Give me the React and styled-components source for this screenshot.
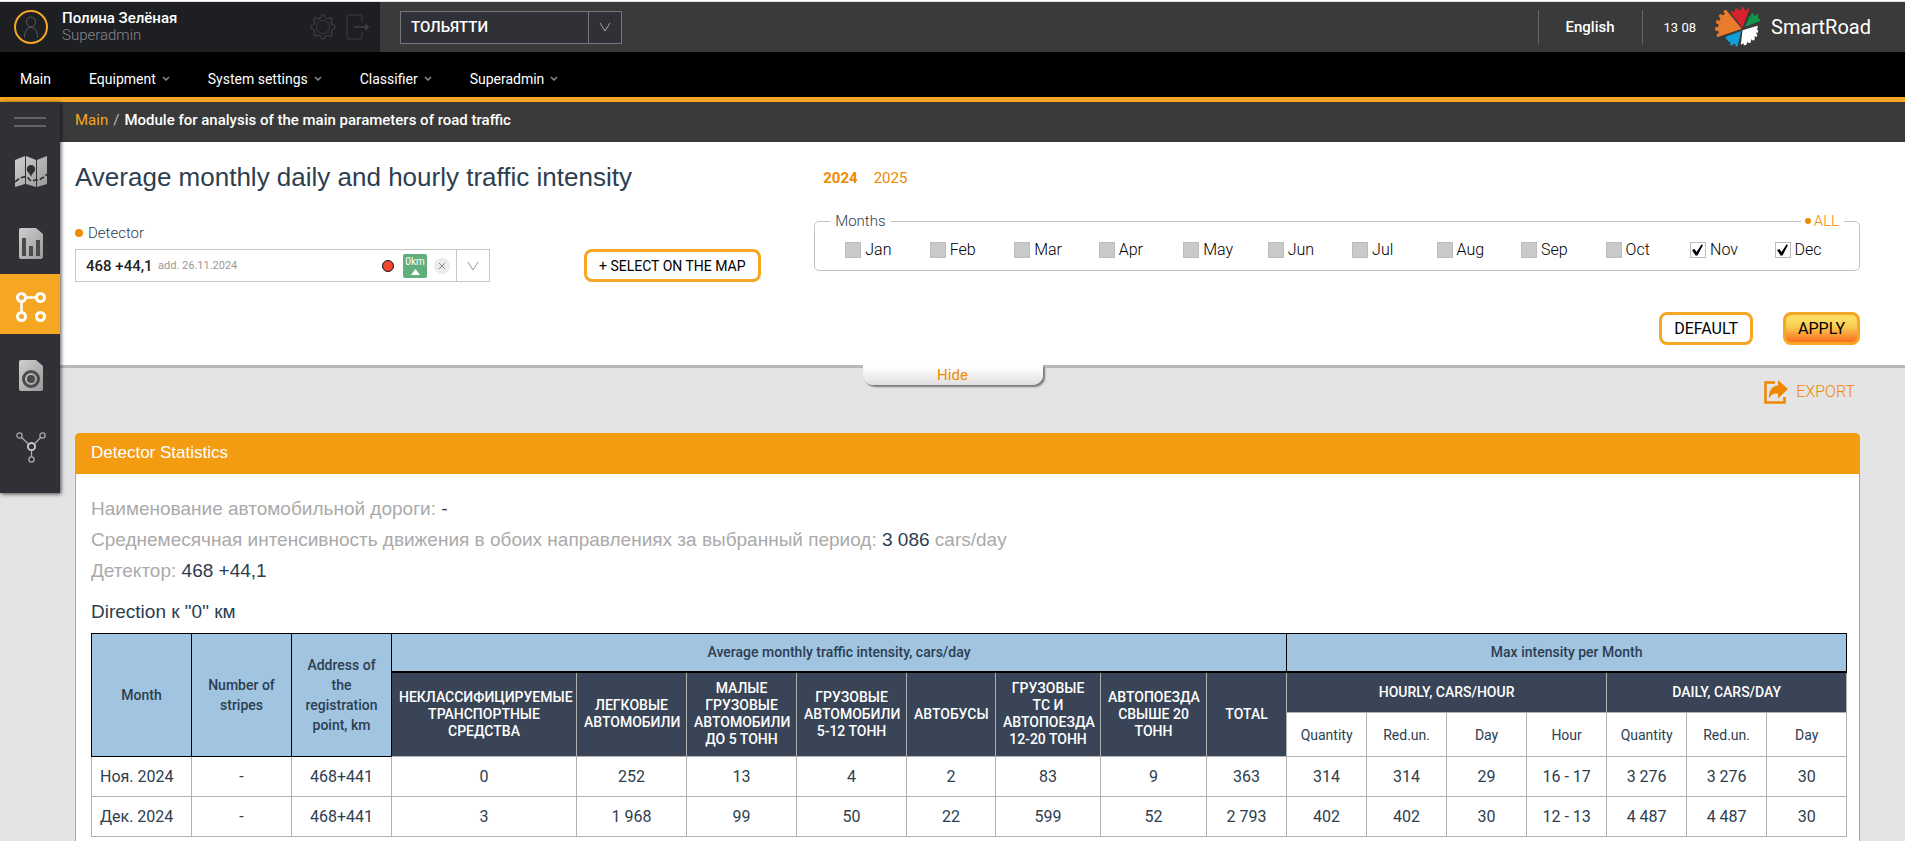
import { useState } from "react";
import styled, { createGlobalStyle } from "styled-components";

const GlobalStyle = createGlobalStyle`
  *,
  *::before,
  *::after {
    box-sizing: border-box;
  }
  body {
    margin: 0;
    background-color: #fff;
    color: #2c3e50;
    font-family: Roboto, "Liberation Sans", sans-serif;
    font-size: 15px;
  }
  button,
  select,
  input {
    font-family: inherit;
    margin: 0;
  }
  button {
    cursor: pointer;
  }
  a {
    color: inherit;
    text-decoration: none;
  }
  ul {
    list-style: none;
    margin: 0;
    padding: 0;
  }
`;

const Page = styled.div`
  display: flex;
  flex-direction: column;
  min-height: 100vh;
  padding-top: 1px;
  padding-right: 3px;
`;

const TopBar = styled.header`
  display: flex;
  height: 51px;
  border-top: 1px solid #dfe1e5;
  background-color: #393a39;
  color: #fff;
`;

const UserBox = styled.div`
  display: flex;
  align-items: center;
  width: 380px;
  padding: 0 10px 0 14px;
  background-color: #1e1f23;
`;

const Avatar = styled.div`
  display: grid;
  place-items: center;
  width: 34px;
  height: 34px;
  margin-right: 14px;
  border: 2px solid #f5a623;
  border-radius: 50%;
`;

const UserName = styled.div`
  flex: 1;
  line-height: 17px;

  strong {
    display: block;
    font-size: 15px;
    font-weight: 500;
  }
  span {
    display: block;
    color: #85868a;
    font-size: 15px;
    font-weight: 300;
  }
`;

const IconButton = styled.button`
  display: flex;
  margin-left: 10px;
  padding: 0;
  border: none;
  background: none;
  color: #3f4043;
`;

const CitySelect = styled.div`
  position: relative;
  align-self: center;
  width: 222px;
  height: 33px;
  margin-left: 20px;
  border: 1px solid #77787a;
  background-color: #303137;

  select {
    appearance: none;
    width: 100%;
    height: 100%;
    padding: 0 44px 0 10px;
    border: none;
    background: none;
    color: #fff;
    font-size: 15px;
    font-weight: 500;
  }
`;

const SelectArrow = styled.span`
  position: absolute;
  top: 0;
  right: 0;
  display: grid;
  place-items: center;
  width: 33px;
  height: 100%;
  border-left: 1px solid #77787a;
  color: #a5a6a8;
  pointer-events: none;
`;

const TopRight = styled.div`
  display: flex;
  align-items: center;
  margin-left: auto;
  padding-right: 34px;
`;

const Language = styled.button`
  height: 34px;
  padding: 0 27px;
  border: solid #636463;
  border-width: 0 1px;
  background: none;
  color: #fff;
  font-size: 15px;
  font-weight: 500;
`;

const Clock = styled.time`
  padding: 0 19px 0 21px;
  font-size: 13px;
`;

const Brand = styled.a`
  display: flex;
  align-items: center;
  gap: 10px;
  font-size: 20px;
`;

const MainMenu = styled.nav`
  display: flex;
  align-items: center;
  gap: 38px;
  height: 50px;
  padding: 8px 20px 0;
  border-bottom: 5px solid #f5a623;
  background-color: #000;
  color: #fff;
  font-size: 14px;

  a {
    display: flex;
    align-items: center;
    gap: 6px;
  }
  svg {
    color: #8d8d8d;
  }
`;

const Body = styled.div`
  display: flex;
  flex: 1;
  background-color: #e4e4e4;
`;

const SideNav = styled.nav`
  position: relative;
  z-index: 1;
  flex: none;
  align-self: flex-start;
  width: 60px;
  padding-bottom: 15px;
  background-color: #303137;
  box-shadow: 1px 1px 4px rgba(0, 0, 0, 0.7);

  ul {
    display: grid;
    grid-template-rows: 76px 68px 60px 76px 68px;
  }
`;

const MenuToggle = styled.button`
  display: flex;
  flex-direction: column;
  gap: 6px;
  width: 60px;
  height: 28px;
  padding: 15px 14px 0;
  border: none;
  background: none;

  span {
    height: 2px;
    background-color: #626366;
  }
`;

const SideLink = styled.a`
  display: grid;
  place-items: center;
  height: 100%;
  padding: 6px 0 0 2px;
  background-color: ${({ $active }) => ($active ? "#f5a623" : "transparent")};
`;

const Content = styled.div`
  display: flex;
  flex: 1;
  flex-direction: column;
  min-width: 0;
`;

const Breadcrumbs = styled.div`
  height: 40px;
  padding: 0 15px;
  background-color: #393a39;
  color: #fff;
  font-size: 15px;
  font-weight: 500;
  line-height: 37px;

  a {
    color: #f5a623;
    font-weight: 400;
  }
  i {
    margin: 0 5px;
    color: #bbb;
    font-style: normal;
    font-weight: 400;
  }
`;

const Filters = styled.form`
  position: relative;
  display: grid;
  grid-template-columns: 41fr 58fr;
  padding: 20px 45px 20px 15px;
  border-bottom: 3px solid #b9b9b9;
  background-color: #fff;
`;

const Title = styled.h1`
  margin: 0 0 33px;
  font-family: "Liberation Sans", Arial, sans-serif;
  font-size: 26px;
  font-weight: 400;
  line-height: 30px;
`;

const DetectorLabel = styled.label`
  display: flex;
  align-items: center;
  gap: 5px;
  margin-bottom: 4px;
  font-size: 15px;
  font-weight: 300;
  line-height: 16px;

  &::before {
    content: "";
    width: 8px;
    height: 8px;
    border-radius: 50%;
    background-color: #f08a00;
  }
`;

const DetectorRow = styled.div`
  display: flex;
  align-items: center;
  gap: 94px;
  margin-top: 8px;
`;

const DetectorField = styled.div`
  display: flex;
  align-items: center;
  width: 415px;
  height: 33px;
  padding-left: 10px;
  border: 1px solid #c6c6c6;

  select {
    appearance: none;
    padding: 0;
    border: none;
    background: none;
    color: #222;
    font-size: 15px;
    font-weight: 500;
  }
  small {
    flex: 1;
    margin-left: 5px;
    color: #999;
    font-size: 11px;
  }
`;

const StatusDot = styled.span`
  width: 12px;
  height: 12px;
  border: 1px solid #111;
  border-radius: 50%;
  background-color: #f0492e;
`;

const KmBadge = styled.span`
  display: flex;
  flex-direction: column;
  align-items: center;
  gap: 2px;
  width: 24px;
  height: 24px;
  margin: 0 7px 0 9px;
  padding-top: 3px;
  border-radius: 2px;
  background-color: #63ae7d;
  color: #fff;
  font-size: 10px;
  line-height: 10px;
`;

const ClearButton = styled.button`
  display: grid;
  place-items: center;
  width: 16px;
  height: 16px;
  margin-right: 6px;
  padding: 0;
  border: none;
  border-radius: 50%;
  background-color: #ececec;
  color: #888;
`;

const OpenButton = styled.button`
  display: grid;
  place-items: center;
  width: 33px;
  height: 31px;
  padding: 0;
  border: none;
  border-left: 1px solid #c6c6c6;
  background: none;
  color: #999;
`;

const OutlineButton = styled.button`
  height: 33px;
  padding: 0 12px;
  border: 3px solid #f5a623;
  border-radius: 8px;
  background: ${({ $filled }) =>
    $filled ? "linear-gradient(#fbdb62 20%, #f9c94f 45%, #fb6d20)" : "#fff"};
  color: #000;
  font-size: ${({ $small }) => ($small ? "14px" : "16px")};
`;

const Years = styled.div`
  display: flex;
  gap: 16px;
  margin: 7px 0 24px 9px;
`;

const YearButton = styled.button`
  padding: 0;
  border: none;
  background: none;
  color: #f08a00;
  font-size: 15px;
  font-weight: ${({ $active }) => ($active ? 700 : 400)};
  line-height: 18px;
`;

const Months = styled.fieldset`
  position: relative;
  margin: 0;
  padding: 11px 0 12px 30px;
  border: 1px solid #c2c2c2;
  border-radius: 5px;

  legend {
    margin-left: -15px;
    padding: 0 5px;
    font-size: 15px;
    font-weight: 300;
    line-height: 20px;
  }
`;

const AllButton = styled.button`
  position: absolute;
  top: -20px;
  right: 15px;
  display: flex;
  align-items: center;
  gap: 3px;
  padding: 0 5px 0 4px;
  border: none;
  background-color: #fff;
  color: #f08a00;
  font-size: 15px;
  font-weight: 300;
  line-height: 20px;

  &::before {
    content: "";
    width: 6px;
    height: 6px;
    border-radius: 50%;
    background-color: #f08a00;
  }
`;

const MonthList = styled.div`
  display: grid;
  grid-template-columns: repeat(12, 1fr);
`;

const MonthLabel = styled.label`
  display: flex;
  align-items: center;
  gap: 4px;
  color: #000;
  font-size: 16px;
  font-weight: 300;
  line-height: 16px;
`;

const CheckBox = styled.span`
  display: grid;
  width: 16px;
  height: 16px;

  input,
  svg {
    grid-area: 1 / 1;
  }
  input {
    appearance: none;
    width: 16px;
    height: 16px;
    border: 1px solid #bdbdbd;
    background-color: #c9c9c9;
  }
  input:checked {
    background-color: #fff;
  }
  svg {
    display: none;
    pointer-events: none;
  }
  input:checked + svg {
    display: block;
  }
`;

const FormActions = styled.div`
  display: flex;
  justify-content: flex-end;
  gap: 30px;
  margin-top: 41px;
`;

const HideButton = styled.button`
  position: absolute;
  top: 100%;
  left: calc(50% - 30px);
  width: 180px;
  height: 20px;
  padding: 0;
  border: none;
  border-radius: 0 0 10px 10px;
  background: linear-gradient(#fff 10%, #dfdfdf);
  box-shadow: 2px 2px 2px #777;
  color: #f08a00;
  font-size: 15px;
  transform: translateX(-50%);
`;

const Toolbar = styled.div`
  display: flex;
  justify-content: flex-end;
  padding: 12px 50px 29px 0;
`;

const ExportButton = styled.button`
  display: flex;
  align-items: center;
  gap: 8px;
  padding: 0;
  border: none;
  background: none;
  color: #ef8600;
  font-size: 16px;
  font-weight: 300;
  line-height: 24px;
`;

const Panel = styled.section`
  flex: 1;
  margin: 0 45px 0 15px;
  border: solid #f39c12;
  border-width: 0 1px;
  border-radius: 5px 5px 0 0;
  background-color: #fff;
  font-family: "Liberation Sans", Arial, sans-serif;
`;

const PanelHeader = styled.h2`
  height: 41px;
  margin: 0 -1px;
  padding: 0 16px;
  border-radius: 5px 5px 0 0;
  background-color: #f39c12;
  color: #fff;
  font-size: 17px;
  font-weight: 400;
  line-height: 39px;
`;

const PanelBody = styled.div`
  padding: 19px 13px 4px 15px;
`;

const InfoLine = styled.p`
  margin: 0;
  color: #aaa;
  font-size: 19px;
  line-height: 31px;

  b {
    color: #2c3e50;
    font-weight: 400;
  }
`;

const Direction = styled.h3`
  margin: 10px 0 5px;
  font-size: 19px;
  font-weight: 400;
  line-height: 32px;
`;

const StatsTable = styled.table`
  width: 100%;
  border-collapse: collapse;
  table-layout: fixed;
  background-color: #fff;
  font-family: Roboto, "Liberation Sans", sans-serif;
  text-align: center;

  th,
  td {
    padding: 0 7px;
    border: 1px solid #b0b0b0;
  }
  td {
    height: 40px;
    font-size: 16px;
    font-weight: 400;
  }
  td:first-child {
    padding-left: 8px;
    text-align: left;
  }
`;

const GroupHead = styled.th`
  height: 38px;

  ${StatsTable} & {
    padding: 0 12px;
    border: 1px solid #000;
    border-bottom-width: ${({ rowSpan }) => (rowSpan ? "1px" : "2px")};
  }
  background-color: #a1c4e1;
  font-size: 14px;
  font-weight: 500;
  line-height: 20px;
`;

const DarkHead = styled.th`
  height: 41px;
  background-color: #394457;
  color: #fff;
  font-size: 14px;
  font-weight: 500;
  line-height: 17px;
  text-transform: uppercase;
`;

const SubHead = styled.th`
  height: 44px;
  font-size: 14px;
  font-weight: 400;
`;

const menuItems = ["Equipment", "System settings", "Classifier", "Superadmin"];

const monthNames = [
  "Jan",
  "Feb",
  "Mar",
  "Apr",
  "May",
  "Jun",
  "Jul",
  "Aug",
  "Sep",
  "Oct",
  "Nov",
  "Dec",
];

const columnWidths = [
  100, 100, 100, 185, 110, 110, 110, 89, 105, 106, 80, 80, 80, 80, 80, 80, 80,
  80,
];

const vehicleHeads = [
  "Неклассифицируемые транспортные средства",
  "Легковые автомобили",
  "Малые грузовые автомобили до 5 тонн",
  "Грузовые автомобили 5-12 тонн",
  "Автобусы",
  "Грузовые ТС и автопоезда 12-20 тонн",
  "Автопоезда свыше 20 тонн",
  "Total",
];

const subHeads = [
  "Quantity",
  "Red.un.",
  "Day",
  "Hour",
  "Quantity",
  "Red.un.",
  "Day",
];

const rows = [
  ["Ноя. 2024", "-", "468+441", "0", "252", "13", "4", "2", "83", "9", "363"]
    .concat(["314", "314", "29", "16 - 17", "3 276", "3 276", "30"]),
  ["Дек. 2024", "-", "468+441", "3", "1 968", "99", "50", "22", "599", "52"]
    .concat(["2 793", "402", "402", "30", "12 - 13", "4 487", "4 487", "30"]),
];

function Chevron({ width = 12, height = 10, stroke = 1 }) {
  return (
    <svg width={width} height={height} viewBox={`0 0 ${width} ${height}`}>
      <path
        d={`M1 1 L${width / 2} ${height - 1} L${width - 1} 1`}
        fill="none"
        stroke="currentColor"
        strokeWidth={stroke}
      />
    </svg>
  );
}

function UserIcon() {
  return (
    <svg width="16" height="22" viewBox="0 0 16 22" fill="none" stroke="#5c5d60">
      <ellipse cx="8" cy="6" rx="4.5" ry="5" />
      <path d="M1.5 21.5C1.5 15 4 11.5 8 11.5s6.500 3.500 6.500 10" />
    </svg>
  );
}

function GearIcon() {
  const teeth = [0, 45, 90, 135, 180, 225, 270, 315];
  return (
    <svg width="26" height="26" viewBox="0 0 26 26" fill="none" stroke="currentColor">
      <circle cx="13" cy="13" r="6.500" />
      {teeth.map((angle) => (
        <path
          key={angle}
          transform={`rotate(${angle} 13 13)`}
          d="M9.300 4.300 L11 3.700 L11.500 1 H14.500 L15 3.700 L16.700 4.300 Q17.800 4.800 18.300 4"
        />
      ))}
    </svg>
  );
}

function LogoutIcon() {
  return (
    <svg width="24" height="26" viewBox="0 0 24 26" fill="none" stroke="currentColor">
      <path d="M16 8 V3 Q16 1 14 1 H3 Q1 1 1 3 V23 Q1 25 3 25 H14 Q16 25 16 23 V18" />
      <path d="M8 13 H22" strokeWidth="1.500" />
      <path d="M19 9.500 L23.500 13 L19 16.500 Z" fill="currentColor" stroke="none" />
    </svg>
  );
}

function BrandLogo() {
  return (
    <svg width="46" height="40" viewBox="645 21 137 120">
      <path
        fill="#e87b2c"
        d="M725 86 L651 112 L649 103 L656 100 L654 92 L645 92 L645 82 L654 81 L655 73 L647 70 L649 60 L658 62 L661 55 L655 49 L660 42 L668 46 L674 41 L669 33 L678 29 L683 36 Z"
      />
      <path
        fill="#d8222b"
        d="M727 83 L690 37 L695 33 L699 35 L705 33 L704 26 L712 24 L715 31 L723 30 L724 22 L732 22 L733 30 L740 30 L742 24 L748 26 Z"
      />
      <path
        fill="#0b9a4b"
        d="M735 80 L748 49 L752 50 L753 41 L760 40 L761 47 L766 47 L770 42 L775 46 L772 52 L777 56 L781 62 Z"
      />
      <path
        fill="#fff"
        d="M727 91 L772 77 L773 84 L769 87 L774 91 L773 98 L767 98 L772 105 L769 111 L763 109 L764 118 L759 122 L753 118 L752 127 L746 130 L742 125 L738 135 L731 136 L730 130 L722 134 Z"
      />
      <path
        fill="#119fda"
        d="M723 93 L714 131 L712 140 L706 139 L706 133 L700 132 L695 137 L689 133 L692 126 L685 125 L681 119 L676 114 L677 110 Z"
      />
    </svg>
  );
}

function Silver() {
  return (
    <defs>
      <linearGradient id="silver" x1="0" y1="0" x2="1" y2="1">
        <stop offset="0" stopColor="#cfcfcf" />
        <stop offset="1" stopColor="#9a9a9a" />
      </linearGradient>
    </defs>
  );
}

function MapIcon() {
  return (
    <svg width="32" height="31" viewBox="0 0 32 31">
      <Silver />
      <path fill="url(#silver)" d="M0 4 L10 0 V28 L0 31 Z M11 0 L21 4 V31 L11 28 Z M22 4 L32 0 V28 L22 31 Z" />
      <path
        fill="#303137"
        d="M16 9 a4.200 4.200 0 0 1 4.200 4.200 C20.200 16 17 17 16 21 C15 17 11.800 16 11.800 13.200 A4.200 4.200 0 0 1 16 9 Z"
      />
      <path d="M0 26 Q6 20 12 21 L16 25 L21 24 Q27 24 32 18" fill="none" stroke="#303137" strokeWidth="1.600" strokeDasharray="5 2" />
    </svg>
  );
}

function ReportIcon() {
  return (
    <svg width="24" height="31" viewBox="0 0 24 31">
      <path fill="url(#silver)" d="M2 0 H17 L24 6 V29 Q24 31 22 31 H2 Q0 31 0 29 V2 Q0 0 2 0 Z" />
      <path fill="#4b4b4b" d="M3 10 H7 V28 H3 Z M10 18 H14 V28 H10 Z M17 12 H21 V28 H17 Z" />
    </svg>
  );
}

function NodesIcon() {
  return (
    <svg width="30" height="30" viewBox="0 0 30 30" fill="none" stroke="#fff" strokeWidth="3">
      <circle cx="5.500" cy="5.500" r="4" />
      <circle cx="24.500" cy="5.500" r="4" />
      <circle cx="5.500" cy="24.500" r="4" />
      <circle cx="24.500" cy="24.500" r="4" />
      <path d="M9.500 5.500 H20.500 M5.500 9.500 V20.500" strokeWidth="2.500" />
    </svg>
  );
}

function CameraIcon() {
  return (
    <svg width="24" height="31" viewBox="0 0 24 31">
      <path fill="url(#silver)" d="M2 0 H17 L24 6 V29 Q24 31 22 31 H2 Q0 31 0 29 V2 Q0 0 2 0 Z" />
      <circle cx="12" cy="19" r="7.500" fill="none" stroke="#4b4b4b" strokeWidth="3" />
      <circle cx="12" cy="19" r="4" fill="#4b4b4b" />
    </svg>
  );
}

function NetworkIcon() {
  return (
    <svg width="30" height="31" viewBox="0 0 30 31" fill="none" stroke="#aaa">
      <circle cx="3.500" cy="3.500" r="2.600" strokeWidth="1.300" />
      <circle cx="26.500" cy="3.500" r="2.600" strokeWidth="1.300" />
      <circle cx="15.500" cy="27.500" r="2.600" strokeWidth="1.300" />
      <circle cx="15.500" cy="14.500" r="3.600" stroke="#c4c4c4" strokeWidth="2" />
      <path d="M5.500 5.500 L12.500 12 M24.500 5.500 L18.500 12 M15.500 18.500 V25" strokeWidth="1.300" />
    </svg>
  );
}

function ExportIcon() {
  return (
    <svg width="24" height="24" viewBox="0 0 24 24">
      <path d="M11 2.500 H1.500 V22.500 H20.500 V17" fill="none" stroke="currentColor" strokeWidth="2.500" />
      <path
        fill="currentColor"
        d="M14 0 L24 9 L14 18.500 V13.500 C9 13 7 15 5 18.500 C4.500 11 8 6 14 5.500 Z"
      />
    </svg>
  );
}

const sideItems = [
  { title: "Map", icon: <MapIcon /> },
  { title: "Reports", icon: <ReportIcon /> },
  { title: "Traffic analysis", icon: <NodesIcon />, active: true },
  { title: "Cameras", icon: <CameraIcon /> },
  { title: "Network", icon: <NetworkIcon /> },
];

function Header() {
  return (
    <TopBar>
      <UserBox>
        <Avatar>
          <UserIcon />
        </Avatar>
        <UserName>
          <strong>Полина Зелёная</strong>
          <span>Superadmin</span>
        </UserName>
        <IconButton type="button" aria-label="Settings">
          <GearIcon />
        </IconButton>
        <IconButton type="button" aria-label="Log out">
          <LogoutIcon />
        </IconButton>
      </UserBox>
      <CitySelect>
        <select aria-label="City">
          <option>ТОЛЬЯТТИ</option>
        </select>
        <SelectArrow>
          <Chevron width={12} height={10} />
        </SelectArrow>
      </CitySelect>
      <TopRight>
        <Language type="button">English</Language>
        <Clock>13 08</Clock>
        <Brand href="#">
          <BrandLogo />
          SmartRoad
        </Brand>
      </TopRight>
    </TopBar>
  );
}

function SideBar() {
  return (
    <SideNav>
      <MenuToggle type="button" aria-label="Menu">
        <span />
        <span />
      </MenuToggle>
      <ul>
        {sideItems.map((item) => (
          <li key={item.title}>
            <SideLink href="#" aria-label={item.title} $active={item.active}>
              {item.icon}
            </SideLink>
          </li>
        ))}
      </ul>
    </SideNav>
  );
}

function FilterForm() {
  const [year, setYear] = useState("2024");
  const [months, setMonths] = useState(["Nov", "Dec"]);

  function toggleMonth(name) {
    setMonths((list) =>
      list.includes(name) ? list.filter((m) => m !== name) : [...list, name]
    );
  }

  return (
    <Filters onSubmit={(e) => e.preventDefault()}>
      <div>
        <Title>Average monthly daily and hourly traffic intensity</Title>
        <DetectorLabel htmlFor="detector">Detector</DetectorLabel>
        <DetectorRow>
          <DetectorField>
            <select id="detector">
              <option>468 +44,1</option>
            </select>
            <small>add. 26.11.2024</small>
            <StatusDot />
            <KmBadge>
              0km
              <svg width="9" height="6" viewBox="0 0 9 6" fill="#fff">
                <path d="M4.500 0 L9 6 H0 Z" />
              </svg>
            </KmBadge>
            <ClearButton type="button" aria-label="Clear">
              <svg width="6" height="6" viewBox="0 0 6 6" stroke="currentColor">
                <path d="M0 0 L6 6 M6 0 L0 6" />
              </svg>
            </ClearButton>
            <OpenButton type="button" aria-label="Open">
              <Chevron width={12} height={10} />
            </OpenButton>
          </DetectorField>
          <OutlineButton type="button" $small>
            + SELECT ON THE MAP
          </OutlineButton>
        </DetectorRow>
      </div>
      <div>
        <Years>
          {["2024", "2025"].map((y) => (
            <YearButton
              key={y}
              type="button"
              $active={y === year}
              onClick={() => setYear(y)}
            >
              {y}
            </YearButton>
          ))}
        </Years>
        <Months>
          <legend>Months</legend>
          <AllButton type="button" onClick={() => setMonths(monthNames)}>
            ALL
          </AllButton>
          <MonthList>
            {monthNames.map((name) => (
              <MonthLabel key={name}>
                <CheckBox>
                  <input
                    type="checkbox"
                    checked={months.includes(name)}
                    onChange={() => toggleMonth(name)}
                  />
                  <svg width="16" height="16" viewBox="0 0 16 16">
                    <path
                      d="M2 8 L4.500 7 L6.500 10 L11.500 2.500 L13 3 L7.500 13.500 L5.500 13.500 Z"
                      fill="#000"
                    />
                  </svg>
                </CheckBox>
                {name}
              </MonthLabel>
            ))}
          </MonthList>
        </Months>
        <FormActions>
          <OutlineButton type="button">DEFAULT</OutlineButton>
          <OutlineButton type="submit" $filled>
            APPLY
          </OutlineButton>
        </FormActions>
      </div>
      <HideButton type="button">Hide</HideButton>
    </Filters>
  );
}

function Statistics() {
  return (
    <StatsTable>
      <colgroup>
        {columnWidths.map((width, i) => (
          <col key={i} width={width} />
        ))}
      </colgroup>
      <thead>
        <tr>
          <GroupHead rowSpan={3}>Month</GroupHead>
          <GroupHead rowSpan={3}>Number of stripes</GroupHead>
          <GroupHead rowSpan={3}>Address of the registration point, km</GroupHead>
          <GroupHead colSpan={8}>
            Average monthly traffic intensity, cars/day
          </GroupHead>
          <GroupHead colSpan={7}>Max intensity per Month</GroupHead>
        </tr>
        <tr>
          {vehicleHeads.map((text) => (
            <DarkHead key={text} rowSpan={2}>
              {text}
            </DarkHead>
          ))}
          <DarkHead colSpan={4}>Hourly, cars/hour</DarkHead>
          <DarkHead colSpan={3}>Daily, cars/day</DarkHead>
        </tr>
        <tr>
          {subHeads.map((text, i) => (
            <SubHead key={i}>{text}</SubHead>
          ))}
        </tr>
      </thead>
      <tbody>
        {rows.map((row) => (
          <tr key={row[0]}>
            {row.map((cell, i) => (
              <td key={i}>{cell}</td>
            ))}
          </tr>
        ))}
      </tbody>
    </StatsTable>
  );
}

function App() {
  return (
    <Page>
      <GlobalStyle />
      <Header />
      <MainMenu>
        <a href="#">Main</a>
        {menuItems.map((item) => (
          <a href="#" key={item}>
            {item}
            <Chevron width={8} height={5} stroke={1.5} />
          </a>
        ))}
      </MainMenu>
      <Body>
        <SideBar />
        <Content>
          <Breadcrumbs>
            <a href="#">Main</a>
            <i>/</i>
            Module for analysis of the main parameters of road traffic
          </Breadcrumbs>
          <FilterForm />
          <Toolbar>
            <ExportButton type="button">
              <ExportIcon />
              EXPORT
            </ExportButton>
          </Toolbar>
          <Panel>
            <PanelHeader>Detector Statistics</PanelHeader>
            <PanelBody>
              <InfoLine>
                Наименование автомобильной дороги: <b>-</b>
              </InfoLine>
              <InfoLine>
                Среднемесячная интенсивность движения в обоих направлениях за
                выбранный период: <b>3 086</b> cars/day
              </InfoLine>
              <InfoLine>
                Детектор: <b>468 +44,1</b>
              </InfoLine>
              <Direction>Direction к "0" км</Direction>
              <Statistics />
            </PanelBody>
          </Panel>
        </Content>
      </Body>
    </Page>
  );
}

export default App;
